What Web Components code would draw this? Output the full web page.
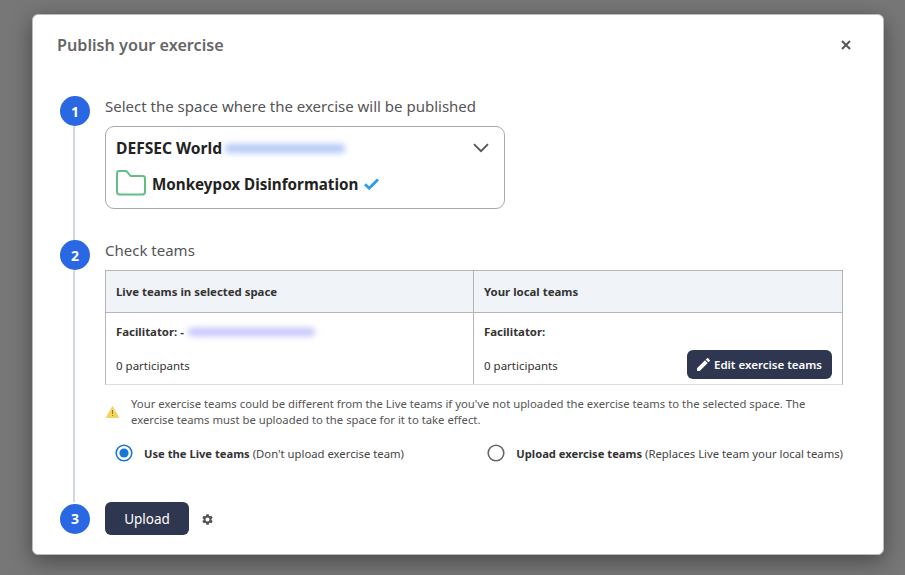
<!DOCTYPE html>
<html>
<head>
<meta charset="utf-8">
<title>Publish your exercise</title>
<style>
  html,body{margin:0;padding:0;height:100%;}
  body{font-family:"Noto Sans",sans-serif;background:#777;overflow:hidden;}
</style>
</head>
<body>
<publish-modal heading="Publish your exercise">
  <step-item num="1" label="Select the space where the exercise will be published" gap="31">
    <space-select space="DEFSEC World" folder="Monkeypox Disinformation"></space-select>
  </step-item>
  <step-item num="2" label="Check teams" gap="38">
    <teams-table></teams-table>
    <warn-note>Your exercise teams could be different from the Live teams if you've not uploaded the exercise teams to the selected space. The exercise teams must be uploaded to the space for it to take effect.</warn-note>
    <radio-row></radio-row>
  </step-item>
  <step-item num="3" last>
    <upload-bar></upload-bar>
  </step-item>
</publish-modal>

<script>
class PublishModal extends HTMLElement{
  constructor(){
    super();
    this.attachShadow({mode:'open'});
    this.shadowRoot.innerHTML = `
      <style>
        :host{display:block;box-sizing:border-box;height:575px;padding:14px 21px 20px 32px;}
        .box{box-sizing:border-box;height:541px;background:#fff;border-radius:6px;padding:0 40px 0 27px;
          border:1px solid #bbb;box-shadow:0 6px 22px rgba(0,0,0,.4);}
        header{display:flex;justify-content:space-between;align-items:center;height:59px;margin-left:-3px;margin-right:-8px;margin-bottom:22px;}
        h1{margin:0;font-size:16.2px;font-weight:600;color:#666;line-height:22px;}
        svg{display:block;}
      </style>
      <div class="box">
        <header>
          <h1></h1>
          <svg width="10" height="10" viewBox="0 0 10 10"><path d="M1 1l8 8M9 1l-8 8" stroke="#555" stroke-width="2" fill="none"/></svg>
        </header>
        <slot></slot>
      </div>`;
    this.shadowRoot.querySelector('h1').textContent = this.getAttribute('heading');
  }
}

class StepItem extends HTMLElement{
  constructor(){
    super();
    this.attachShadow({mode:'open'});
    this.shadowRoot.innerHTML = `
      <style>
        :host{display:flex;gap:15px;}
        .rail{width:30px;flex:none;display:flex;flex-direction:column;align-items:center;}
        .num{width:30px;height:30px;flex:none;border-radius:50%;background:#2a67e3;color:#fff;font-size:14px;font-weight:700;
          display:flex;align-items:center;justify-content:center;}
        .line{flex:1;width:2px;margin-right:3px;background:#cfd6e4;}
        .body{flex:1;min-width:0;}
        .label{font-size:15px;line-height:21px;color:#555;margin-bottom:9px;}
      </style>
      <div class="rail"><div class="num"></div><div class="line"></div></div>
      <div class="body"><div class="label"></div><slot></slot></div>`;
    let s = this.shadowRoot;
    s.querySelector('.num').textContent = this.getAttribute('num');
    if(this.getAttribute('label')){
      s.querySelector('.label').textContent = this.getAttribute('label');
    }else{
      s.querySelector('.label').remove();
    }
    if(this.hasAttribute('last')){
      s.querySelector('.line').remove();
      this.style.alignItems = 'center';
    }
    if(this.getAttribute('gap')){
      s.querySelector('.body').style.paddingBottom = this.getAttribute('gap') + 'px';
    }
  }
}

class SpaceSelect extends HTMLElement{
  constructor(){
    super();
    this.attachShadow({mode:'open'});
    this.shadowRoot.innerHTML = `
      <style>
        :host{display:block;box-sizing:border-box;width:400px;height:83px;border:1px solid #aaa;border-radius:9px;padding:9px 15px 0 10px;color:#222;}
        .row{display:flex;align-items:center;font-weight:700;}
        .top{height:24px;font-size:15.6px;}
        .bot{margin-top:11px;height:26px;font-size:15.2px;}
        .blur{width:120px;height:9px;margin-left:3px;background:#b3c8f6;filter:blur(3px);border-radius:4px;}
        .chev{margin-left:auto;}
        .folder{margin-right:6px;margin-top:-2px;}
        .check{margin-left:6px;}
        svg{display:block;flex:none;}
      </style>
      <div class="row top">
        <span class="sp"></span><div class="blur"></div>
        <svg class="chev" width="16" height="10" viewBox="0 0 16 10"><path d="M1 1.2l7 7 7-7" stroke="#555" stroke-width="1.8" fill="none"/></svg>
      </div>
      <div class="row bot">
        <svg class="folder" width="30" height="26" viewBox="0 0 30 26"><path d="M1 3.4Q1 1 3.4 1H9.5Q10.5 1 11.2 1.8L14.5 6H26.6Q29 6 29 8.4V22.1Q29 24.5 26.6 24.5H3.4Q1 24.5 1 22.1Z" stroke="#5fbf85" stroke-width="2" fill="none" stroke-linejoin="round"/></svg>
        <span class="fl"></span>
        <svg class="check" width="15" height="12" viewBox="0 0 15 12"><path d="M1 6.2l4.2 4L14 1.4" stroke="#2b9cf2" stroke-width="2.8" fill="none"/></svg>
      </div>`;
    this.shadowRoot.querySelector('.sp').textContent = this.getAttribute('space');
    this.shadowRoot.querySelector('.fl').textContent = this.getAttribute('folder');
  }
}

class TeamsTable extends HTMLElement{
  constructor(){
    super();
    this.attachShadow({mode:'open'});
    this.shadowRoot.innerHTML = `
      <style>
        :host{display:grid;grid-template-columns:368px 368px;box-sizing:border-box;width:738px;font-size:11.5px;color:#333;
          border:1px solid #b5b5b5;border-bottom-color:#ddd;}
        .th{height:41px;background:#f0f3f7;border-bottom:1px solid #b5b5b5;font-weight:700;font-size:11.4px;display:flex;align-items:center;padding-left:10px;}
        .td{height:71px;padding:0 10px;}
        .th.a,.td.a{border-right:1px solid #b5b5b5;}
        .f{font-weight:700;font-size:11.4px;line-height:18px;padding-top:10px;display:flex;align-items:center;}
        .blur{width:127px;height:8px;margin-left:4px;background:#c2c2fb;filter:blur(3px);border-radius:4px;}
        .p{line-height:18px;position:relative;top:1px;}
        .split{display:flex;justify-content:space-between;align-items:center;margin-top:9px;}
        .btn{box-sizing:border-box;width:145px;height:29px;background:#2f3650;color:#fff;font-weight:600;border-radius:6px;
          display:flex;align-items:center;justify-content:center;gap:4px;}
        svg{display:block;}
      </style>
      <div class="th a">Live teams in selected space</div>
      <div class="th">Your local teams</div>
      <div class="td a">
        <div class="f">Facilitator: -<div class="blur"></div></div>
        <div class="split"><span class="p">0 participants</span><span style="height:29px"></span></div>
      </div>
      <div class="td">
        <div class="f">Facilitator:</div>
        <div class="split"><span class="p">0 participants</span>
          <div class="btn"><svg width="13" height="13" viewBox="3 3 18 18"><path fill="#fff" d="M3 17.25V21h3.75L17.81 9.94l-3.75-3.75L3 17.25zM20.71 7.04a1 1 0 0 0 0-1.41l-2.34-2.34a1 1 0 0 0-1.41 0l-1.83 1.83 3.75 3.75 1.83-1.83z"/></svg>Edit exercise teams</div>
        </div>
      </div>`;
  }
}

class WarnNote extends HTMLElement{
  constructor(){
    super();
    this.attachShadow({mode:'open'});
    this.shadowRoot.innerHTML = `
      <style>
        :host{display:flex;align-items:center;gap:12px;margin-top:11px;font-size:11.3px;line-height:16px;color:#555;padding-left:1px;}
        .t{width:690px;}
        svg{display:block;flex:none;}
      </style>
      <svg width="13" height="12" viewBox="0 0 13 12"><path d="M6.5.6L12.6 11.4H.4Z" fill="#f4d35e" stroke="#f4d35e" stroke-linejoin="round"/><path d="M6.5 4v4M6.5 9v1" stroke="#9a7d1e" stroke-width="1"/></svg>
      <div class="t"><slot></slot></div>`;
  }
}

class RadioRow extends HTMLElement{
  constructor(){
    super();
    this.attachShadow({mode:'open'});
    this.shadowRoot.innerHTML = `
      <style>
        :host{display:flex;justify-content:space-between;margin-top:14px;padding-left:10px;font-size:11.3px;color:#444;height:22px;align-items:center;}
        .o{display:flex;align-items:center;gap:11px;}
        b{color:#333;font-size:11.2px;}
        svg{display:block;flex:none;}
      </style>
      <div class="o">
        <svg width="18" height="18" viewBox="0 0 18 18"><circle cx="9" cy="9" r="7.8" stroke="#1976d2" stroke-width="1.6" fill="none"/><circle cx="9" cy="9" r="4.6" fill="#1976d2"/></svg>
        <span><b>Use the Live teams</b> (Don't upload exercise team)</span>
      </div>
      <div class="o">
        <svg width="18" height="18" viewBox="0 0 18 18"><circle cx="9" cy="9" r="7.8" stroke="#666" stroke-width="1.6" fill="none"/></svg>
        <span><b>Upload exercise teams</b> (Replaces Live team your local teams)</span>
      </div>`;
  }
}

class UploadBar extends HTMLElement{
  constructor(){
    super();
    this.attachShadow({mode:'open'});
    this.shadowRoot.innerHTML = `
      <style>
        :host{display:flex;align-items:center;gap:13px;}
        .btn{width:84px;height:33px;border-radius:6px;background:#2f3650;color:#fff;font-size:13.5px;display:flex;align-items:center;justify-content:center;}
        svg{display:block;margin-top:2px;}
      </style>
      <div class="btn">Upload</div>
      <svg width="11" height="11" viewBox="2 2 20 20"><path fill="#555" d="M19.14 12.94a7.4 7.4 0 0 0 0-1.88l2.03-1.58a.5.5 0 0 0 .12-.61l-1.92-3.32a.5.5 0 0 0-.59-.22l-2.39.96a7 7 0 0 0-1.62-.94l-.36-2.54a.5.5 0 0 0-.48-.41h-3.84a.5.5 0 0 0-.47.41l-.36 2.54a7 7 0 0 0-1.62.94l-2.39-.96a.5.5 0 0 0-.59.22L2.74 8.87a.5.5 0 0 0 .12.61l2.03 1.58a7.4 7.4 0 0 0 0 1.88l-2.03 1.58a.5.5 0 0 0-.12.61l1.92 3.32c.12.22.37.29.59.22l2.39-.96c.5.38 1.03.7 1.62.94l.36 2.54c.05.24.24.41.48.41h3.84c.24 0 .44-.17.47-.41l.36-2.54a7 7 0 0 0 1.62-.94l2.39.96c.22.08.47 0 .59-.22l1.92-3.32a.5.5 0 0 0-.12-.61zM12 15.6a3.6 3.6 0 1 1 0-7.2 3.6 3.6 0 0 1 0 7.2z"/></svg>`;
  }
}

customElements.define('publish-modal', PublishModal);
customElements.define('step-item', StepItem);
customElements.define('space-select', SpaceSelect);
customElements.define('teams-table', TeamsTable);
customElements.define('warn-note', WarnNote);
customElements.define('radio-row', RadioRow);
customElements.define('upload-bar', UploadBar);
</script>
</body>
</html>
